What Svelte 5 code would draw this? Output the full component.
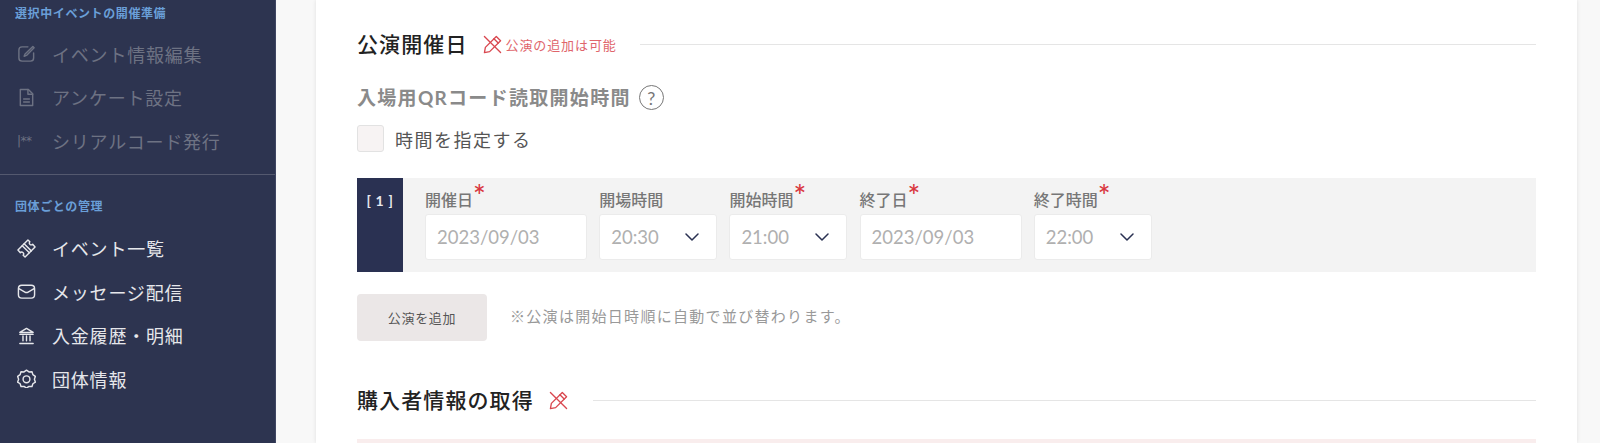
<script>
  const prepItems = [
    { label: 'イベント情報編集', icon: 'edit' },
    { label: 'アンケート設定', icon: 'doc' },
    { label: 'シリアルコード発行', icon: 'serial' }
  ];
  const orgItems = [
    { label: 'イベント一覧', icon: 'ticket' },
    { label: 'メッセージ配信', icon: 'mail' },
    { label: '入金履歴・明細', icon: 'bank' },
    { label: '団体情報', icon: 'gear' }
  ];
  const fields = [
    { label: '開催日', value: '2023/09/03', required: true, type: 'date' },
    { label: '開場時間', value: '20:30', required: false, type: 'time' },
    { label: '開始時間', value: '21:00', required: true, type: 'time' },
    { label: '終了日', value: '2023/09/03', required: true, type: 'date' },
    { label: '終了時間', value: '22:00', required: true, type: 'time' }
  ];
</script>

{#snippet navIcon(name)}
  {#if name === 'serial'}
    <span class="serial-icon">|**</span>
  {:else}
    <svg class="nav-icon" viewBox="0 0 20 20" fill="none" stroke="currentColor" stroke-width="1.5" stroke-linecap="round" stroke-linejoin="round">
      {#if name === 'edit'}
        <path d="M17.5 9.5v5.200a3.300 3.300 0 0 1-3.300 3.300H5.300A3.300 3.300 0 0 1 2 14.700V6.300A3.300 3.300 0 0 1 5.300 3h6.200" />
        <path d="M16.700 2.700l1.300 1.300-8 8-2.500 1 1-2.500z" />
      {:else if name === 'doc'}
        <path d="M3.500 1.500h8.500l4.500 4.500v12.500h-13z" />
        <path d="M11.500 1.500v5h5M7 11.500h6M7 14.800h6" />
      {:else if name === 'ticket'}
        <path d="M1 11.500L11.500 1l2 2a1.800 1.800 0 0 0 3 2.500L19 8.500 8.500 19l-2-2a1.700 1.700 0 0 0-3-2.500z" />
        <path d="M5.500 7l7.500 7.500M7.500 5l7.500 7.500" />
      {:else if name === 'mail'}
        <rect x="1.500" y="3.500" width="17" height="13.500" rx="3.500" />
        <path d="M2 7l6.300 3.600a3.400 3.400 0 0 0 3.400 0L18 7" />
      {:else if name === 'bank'}
        <path d="M3 6.800L10 2.500l7 4.300zM3 8.800h14M6.300 10.500v5M10 10.500v5M13.700 10.500v5M3 18.500h14" />
      {:else if name === 'gear'}
        <path d="M10 1.200l2.600 1.900 3.200-.2.900 3 2.600 1.900-1 3 1 3-2.600 1.700-.9 3-3.200-.2-2.600 1.900-2.600-1.900-3.200.2-.9-3-2.600-1.700 1-3-1-3 2.600-1.900.9-3 3.200.2z" />
        <circle cx="10" cy="10.800" r="3.600" />
      {/if}
    </svg>
  {/if}
{/snippet}

{#snippet pencilOff(cls)}
  <svg class={cls} viewBox="0 0 20 20" fill="none" stroke="currentColor" stroke-width="1.400" stroke-linejoin="round" stroke-linecap="round">
    <path d="M14 1.500l4.500 4.500L7 17.500l-5.500 1 1-5.500z" />
    <path d="M11.500 4l4.500 4.500" />
    <path d="M1.500 1.500l17 17" />
  </svg>
{/snippet}

<div class="page">
  <aside class="sidebar">
    <section class="group prep">
      <h4>選択中イベントの開催準備</h4>
      <ul>
        {#each prepItems as item}
          <li class="disabled">{@render navIcon(item.icon)}<span>{item.label}</span></li>
        {/each}
      </ul>
    </section>
    <section class="group">
      <h4>団体ごとの管理</h4>
      <ul>
        {#each orgItems as item}
          <li>{@render navIcon(item.icon)}<span>{item.label}</span></li>
        {/each}
      </ul>
    </section>
  </aside>

  <main class="main">
    <div class="card">
      <div class="heading first">
        <h2>公演開催日</h2>
        {@render pencilOff('pencil')}
        <span class="note">公演の追加は可能</span>
        <i class="rule"></i>
      </div>

      <div class="qr-title">
        <span>入場用QRコード読取開始時間</span>
        <span class="help">?</span>
      </div>
      <label class="check">
        <span class="box"></span>
        <span>時間を指定する</span>
      </label>

      <div class="perf-row">
        <div class="badge">[ 1 ]</div>
        <div class="fields">
          {#each fields as f}
            <div class="field {f.type}">
              <div class="label">{f.label}{#if f.required}<span class="req">*</span>{/if}</div>
              <div class="input">
                <span>{f.value}</span>
                {#if f.type === 'time'}
                  <svg class="chev" viewBox="0 0 14 8" fill="none" stroke="currentColor" stroke-width="1.500" stroke-linecap="round" stroke-linejoin="round"><path d="M1 1l6 6 6-6" /></svg>
                {/if}
              </div>
            </div>
          {/each}
        </div>
      </div>

      <div class="add-row">
        <button class="add">公演を追加</button>
        <span class="hint">※公演は開始日時順に自動で並び替わります。</span>
      </div>

      <div class="heading second">
        <h2>購入者情報の取得</h2>
        {@render pencilOff('pencil')}
        <i class="rule"></i>
      </div>

      <div class="alert"></div>
    </div>
  </main>
</div>

<style>
  :global(body) {
    margin: 0;
    background: #f8f8f8;
  }

  .page {
    display: flex;
    height: 443px;
    overflow: hidden;
    font-family: Lato, "Noto Sans CJK JP", sans-serif;
  }

  .sidebar {
    width: 275px;
    flex-shrink: 0;
    background: #2d3450;
    border-right: 1px solid #3f4663;
    color: #f0f0f2;
  }

  .group h4 {
    margin: 0;
    padding-left: 15px;
    font-size: 12px;
    line-height: 18px;
    font-weight: 700;
    letter-spacing: 0.6px;
    color: #6a9fd8;
  }

  .group ul {
    list-style: none;
    margin: 0;
    padding: 11px 0 0;
  }

  .prep {
    padding-top: 5px;
    padding-bottom: 11px;
    border-bottom: 1px solid #54596f;
    margin-bottom: 23px;
  }

  .prep ul {
    padding-top: 9px;
  }

  li {
    display: flex;
    align-items: center;
    height: 43.500px;
    padding-left: 17px;
    gap: 16px;
    font-size: 18px;
    letter-spacing: 0.8px;
    color: #e6e7eb;
  }

  li.disabled {
    color: #6d7283;
  }

  .nav-icon {
    width: 19px;
    height: 19px;
    flex-shrink: 0;
  }

  .serial-icon {
    width: 19px;
    flex-shrink: 0;
    font-family: "DejaVu Sans", sans-serif;
    font-size: 12px;
    letter-spacing: -0.5px;
    white-space: nowrap;
  }

  .main {
    flex: 1;
    min-width: 0;
  }

  .card {
    width: 1179px;
    height: 443px;
    margin-left: 40px;
    padding: 0 41px;
    background: #fff;
    box-shadow: 0 0 4px rgba(0, 0, 0, 0.1);
  }

  .heading {
    display: flex;
    align-items: center;
  }

  .heading h2 {
    margin: 0;
    font-size: 21px;
    line-height: 28px;
    font-weight: 500;
    color: #222;
    letter-spacing: 1.100px;
  }

  .heading.first {
    padding-top: 30px;
  }

  .heading.second {
    margin-top: 45px;
  }

  .heading.second .rule {
    margin-left: 25px;
  }

  .pencil {
    width: 19px;
    height: 19px;
    margin-left: 15px;
    color: #d9474f;
    flex-shrink: 0;
  }

  .note {
    margin-left: 4px;
    font-size: 13px;
    color: #e0656b;
    letter-spacing: 0.9px;
    white-space: nowrap;
  }

  .rule {
    flex: 1;
    height: 1px;
    margin-left: 23px;
    background: #e5e5e5;
  }

  .qr-title {
    display: flex;
    align-items: center;
    gap: 8px;
    margin-top: 27px;
    font-size: 19px;
    line-height: 24px;
    font-weight: 700;
    color: #8a8a8a;
    letter-spacing: 1.300px;
  }

  .help {
    width: 25px;
    height: 25px;
    box-sizing: border-box;
    border: 1.500px solid #777;
    border-radius: 50%;
    display: flex;
    align-items: center;
    justify-content: center;
    font-size: 18px;
    font-weight: 400;
    letter-spacing: 0;
    color: #777;
  }

  .check {
    display: flex;
    align-items: center;
    gap: 11px;
    margin-top: 15px;
    font-size: 18px;
    color: #555;
    letter-spacing: 1.500px;
  }

  .box {
    width: 27px;
    height: 27px;
    box-sizing: border-box;
    background: #f7f3f3;
    border: 1px solid #e2e2e2;
    border-radius: 3px;
  }

  .perf-row {
    display: flex;
    height: 94px;
    margin-top: 26px;
    background: #f3f3f3;
  }

  .badge {
    width: 46px;
    background: #2a3152;
    color: #e8e9ee;
    font-size: 14px;
    font-weight: 700;
    text-align: center;
    padding-top: 14px;
    box-sizing: border-box;
    letter-spacing: 0.7px;
  }

  .fields {
    display: flex;
    gap: 12.200px;
    padding-left: 22px;
  }

  .field.date {
    width: 162px;
  }

  .field.time {
    width: 118px;
  }

  .label {
    height: 36px;
    display: flex;
    align-items: flex-start;
    padding-top: 11px;
    box-sizing: border-box;
    font-size: 16px;
    line-height: 22px;
    font-weight: 500;
    color: #777;
  }

  .req {
    color: #d9363e;
    font-size: 30px;
    line-height: 20px;
    margin-top: -4px;
    font-family: Lato, sans-serif;
  }

  .input {
    height: 46px;
    box-sizing: border-box;
    display: flex;
    align-items: center;
    justify-content: space-between;
    padding: 0 17px 0 11px;
    background: #fff;
    border: 1px solid #ebebeb;
    border-radius: 3px;
    font-size: 18.500px;
    color: #b0b0b0;
  }

  .chev {
    width: 14px;
    height: 8px;
    color: #2a3152;
  }

  .add-row {
    display: flex;
    align-items: center;
    gap: 23px;
    margin-top: 22px;
  }

  .add {
    width: 130px;
    height: 47px;
    border: none;
    border-radius: 4px;
    background: #ebe7e7;
    color: #555;
    font-family: inherit;
    font-size: 13px;
    letter-spacing: 0.7px;
    padding-bottom: 2px;
  }

  .hint {
    font-size: 15px;
    color: #999;
    letter-spacing: 1.300px;
    padding-bottom: 4px;
  }

  .alert {
    height: 30px;
    margin-top: 25px;
    background: #f9eded;
  }
</style>
